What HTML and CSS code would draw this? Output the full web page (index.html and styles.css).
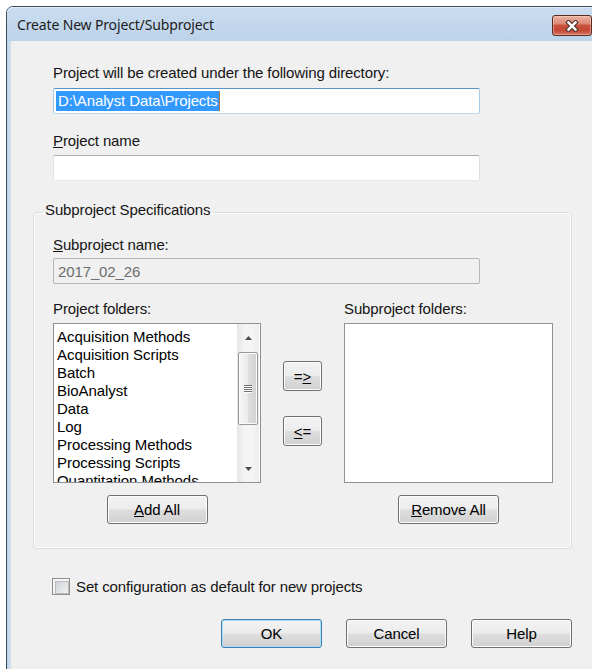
FILE: index.html
```html
<!DOCTYPE html>
<html lang="en">
<head>
<meta charset="utf-8">
<title>Create New Project/Subproject</title>
<link rel="stylesheet" href="styles.css">
</head>
<body>
<div class="window">
  <div class="titlebar">
    <span class="title">Create New Project/Subproject</span>
    <button class="close" aria-label="Close">
      <svg width="14" height="12" viewBox="0 0 14 12">
        <path d="M3.5 2.5 L10.5 9.5 M10.5 2.5 L3.5 9.5" stroke="#5a3a36" stroke-width="4.6" stroke-linecap="square" fill="none"/>
        <path d="M3.5 2.5 L10.5 9.5 M10.5 2.5 L3.5 9.5" stroke="#ffffff" stroke-width="2.4" stroke-linecap="square" fill="none"/>
      </svg>
    </button>
  </div>
  <div class="client">
    <div class="form">
      <div class="field">
        <label class="label">Project will be created under the following directory:</label>
        <div class="textbox focused"><span class="selection">D:\Analyst Data\Projects</span></div>
      </div>
      <div class="field second">
        <label class="label"><u>P</u>roject name</label>
        <div class="textbox"></div>
      </div>

      <fieldset class="group">
        <legend>Subproject Specifications</legend>
        <label class="label"><u>S</u>ubproject name:</label>
        <div class="textbox disabled">2017_02_26</div>

        <div class="folders">
          <div class="folder-col">
            <span class="label">Project folders:</span>
            <div class="listbox">
              <ul class="items">
                <li>Acquisition Methods</li>
                <li>Acquisition Scripts</li>
                <li>Batch</li>
                <li>BioAnalyst</li>
                <li>Data</li>
                <li>Log</li>
                <li>Processing Methods</li>
                <li>Processing Scripts</li>
                <li>Quantitation Methods</li>
              </ul>
              <div class="vscroll">
                <div class="sb-btn">
                  <svg width="7" height="4" viewBox="0 0 7 4"><polygon points="3.5,0 7,4 0,4" fill="#4d4d4d"/></svg>
                </div>
                <div class="sb-track">
                  <div class="sb-thumb"><span class="grip"></span></div>
                </div>
                <div class="sb-btn">
                  <svg width="7" height="4" viewBox="0 0 7 4"><polygon points="0,0 7,0 3.5,4" fill="#4d4d4d"/></svg>
                </div>
              </div>
            </div>
            <button class="btn wide"><u>A</u>dd All</button>
          </div>

          <div class="move-col">
            <button class="btn arrow">=<u>&gt;</u></button>
            <button class="btn arrow"><u>&lt;</u>=</button>
          </div>

          <div class="folder-col second-list">
            <span class="label">Subproject folders:</span>
            <div class="listbox"></div>
            <button class="btn wide"><u>R</u>emove All</button>
          </div>
        </div>
      </fieldset>

      <label class="check-row"><span class="checkbox"></span>Set configuration as default for new projects</label>

      <div class="actions">
        <button class="btn default">OK</button>
        <button class="btn">Cancel</button>
        <button class="btn">Help</button>
      </div>
    </div>
  </div>
</div>
</body>
</html>
```

FILE: styles.css
```css
* {
  box-sizing: border-box;
}

html,
body {
  margin: 0;
  height: 100%;
}

body {
  background: #ffffff;
  overflow: hidden;
  font-family: "Liberation Sans", Arial, sans-serif;
  font-size: 15px;
  letter-spacing: -0.12px;
  color: #000;
}

/* ---------- window frame ---------- */
.window {
  margin: 6px 0 0 6px;
  width: 600px;
  height: calc(100% + 10px);
  border: 1px solid #3e4956;
  border-radius: 7px 7px 0 0;
  background: linear-gradient(to right, #b9cfe7, #d3e1f1 3px, #c4d7ec 5px);
  padding: 0 4px;
  display: flex;
  flex-direction: column;
}

.titlebar {
  height: 34px;
  display: flex;
  align-items: flex-start;
  margin: 0 -4px;
  padding: 0 4px;
  border-radius: 6px 6px 0 0;
  background: linear-gradient(#cadcef, #bdd3ea);
  box-shadow: inset 0 1px 0 #e3edf7;
}

.title {
  flex: 1;
  margin: 9px 0 0 6px;
  font-family: "Noto Sans", "Open Sans", sans-serif;
  font-size: 14px;
  letter-spacing: -0.15px;
  line-height: 18px;
  color: #1c1c1c;
}

.close {
  margin: 8px 9px 0 0;
  width: 40px;
  height: 21px;
  padding: 0;
  border: 1px solid #5a2a22;
  border-radius: 3px;
  background: linear-gradient(#eab1a3, #dc8a77 40%, #c9503b 50%, #c44a34 75%, #d77560);
  box-shadow: inset 0 0 0 1px rgba(255, 220, 210, 0.45);
  display: flex;
  align-items: center;
  justify-content: center;
}

.client {
  flex: 1;
  background: #f0f0f0;
}

.form {
  width: 539px;
  margin-left: 22px;
  padding-top: 23px;
}

/* ---------- labels and text boxes ---------- */
.label {
  display: block;
  line-height: 17px;
  color: #141414;
}

.field {
  padding-left: 20px;
}

.field.second {
  margin-top: 18px;
}

.field .label {
  margin-bottom: 7px;
}

.field.second .label {
  margin-bottom: 6px;
}

.textbox {
  width: 427px;
  height: 26px;
  border: 1px solid;
  border-color: #abadb3 #dbdfe6 #e3e9ef #e2e3ea;
  border-radius: 2px;
  background: #fff;
  display: flex;
  align-items: center;
  padding-left: 2px;
}

.textbox.focused {
  border-color: #5b94c4 #a9cbe6 #b7d9ed #a9cbe6;
}

.selection {
  background: #3399ff;
  color: #fff;
  line-height: 20px;
  padding: 0 1px 0 2px;
  border-right: 1px solid #b3763f;
}

.textbox.disabled {
  margin-top: 5px;
  border-color: #b4b8bb;
  background: #f0f0f0;
  color: #6d6d6d;
  padding-left: 4px;
}

/* ---------- group box ---------- */
.group {
  margin: 20px 0 0;
  padding: 13px 18px 24px 19px;
  border: 1px solid #d5dfe5;
  border-radius: 3px;
  box-shadow: inset 0 0 0 1px #fbfcfd;
  min-width: 0;
}

.group legend {
  margin-left: -10px;
  padding: 0 2px 5px;
  line-height: 17px;
  color: #141414;
}

.folders {
  margin-top: 16px;
  display: flex;
  gap: 22px;
}

.folder-col {
  width: 208px;
  display: flex;
  flex-direction: column;
}

.folder-col.second-list {
  width: 209px;
}

.folder-col .label {
  margin-bottom: 6px;
}

.listbox {
  height: 160px;
  border: 1px solid #8d9198;
  background: #fff;
  display: flex;
  overflow: hidden;
}

.items {
  flex: 1;
  margin: 0;
  padding: 4px 0 0 3px;
  list-style: none;
  overflow: hidden;
  letter-spacing: -0.05px;
}

.items li {
  line-height: 18px;
  white-space: nowrap;
}

/* vertical scroll bar */
.vscroll {
  width: 22px;
  margin-right: 1px;
  display: flex;
  flex-direction: column;
  border-left: 1px solid #e4e4e4;
  background: linear-gradient(to right, #e9e9e9, #f4f4f4 35%, #f4f4f4 70%, #ededed);
}

.sb-btn {
  height: 27px;
  display: flex;
  align-items: center;
  justify-content: center;
}

.sb-track {
  flex: 1;
  padding: 1px 1px 0 0;
}

.sb-thumb {
  height: 73px;
  border: 1px solid #9a9a9a;
  border-radius: 2px;
  background: linear-gradient(to right, #f6f6f6, #ececec 45%, #dcdcdc 55%, #d2d2d2);
  box-shadow: inset 0 0 0 1px #fbfbfb;
  display: flex;
  align-items: center;
  justify-content: center;
}

.grip {
  width: 8px;
  height: 8px;
  background: repeating-linear-gradient(#6f6f6f 0 1px, #fbfbfb 1px 2px);
}

.move-col {
  width: 39px;
  padding-top: 61px;
  display: flex;
  flex-direction: column;
  gap: 25px;
}

/* ---------- buttons ---------- */
.btn {
  height: 29px;
  padding: 0;
  font-family: "Liberation Sans", Arial, sans-serif;
  font-size: 15px;
  letter-spacing: -0.12px;
  color: #000;
  border: 1px solid #707070;
  border-radius: 3px;
  background: linear-gradient(#f3f3f3, #ececec 48%, #dedede 52%, #d0d0d0);
  box-shadow: inset 0 0 0 1px #fcfcfc;
}

.btn.arrow {
  width: 39px;
  height: 30px;
}

.btn.wide {
  width: 101px;
  margin-top: 12px;
  align-self: center;
}

.btn.default {
  border-color: #3c7fb1;
  box-shadow: inset 0 0 0 1px #a8def6;
}

/* ---------- check box row ---------- */
.check-row {
  margin-top: 29px;
  padding-left: 19px;
  display: flex;
  align-items: center;
  gap: 6px;
  line-height: 17px;
  color: #141414;
}

.checkbox {
  width: 18px;
  height: 17px;
  border: 1px solid #8e8f8f;
  background: #f4f4f4;
  padding: 2px;
}

.checkbox::after {
  content: "";
  display: block;
  width: 100%;
  height: 100%;
  border: 1px solid #b8bbc0;
  background: linear-gradient(135deg, #cfd2d6, #f2f2f3);
}

/* ---------- dialog buttons ---------- */
.actions {
  margin-top: 24px;
  display: flex;
  justify-content: flex-end;
  gap: 24px;
}

.actions .btn {
  width: 101px;
}
```
